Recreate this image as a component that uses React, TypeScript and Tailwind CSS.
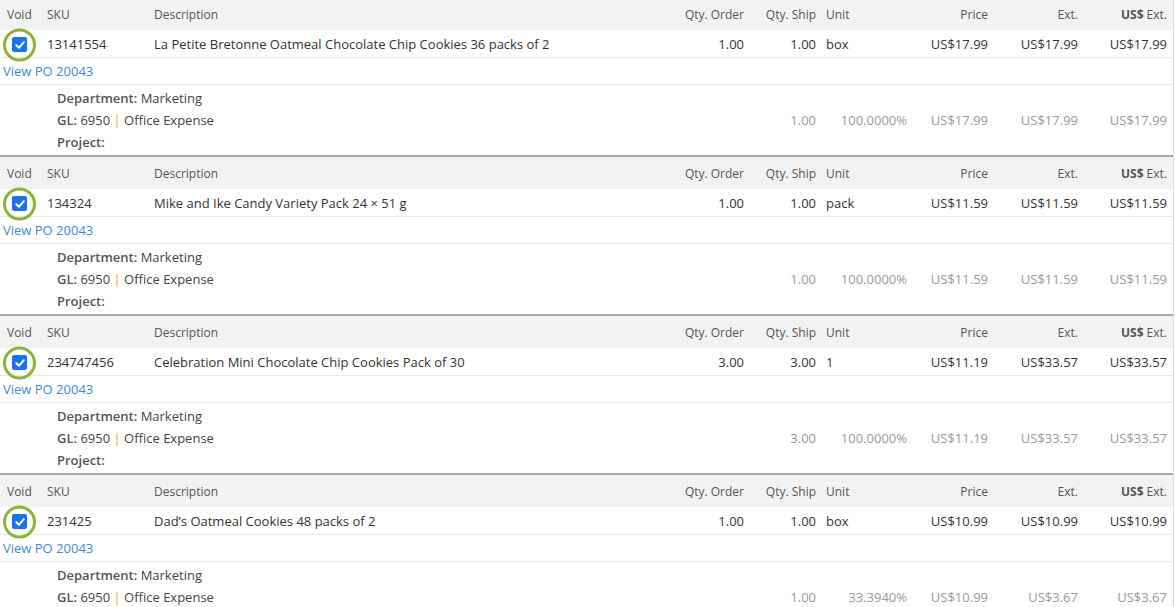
import React from "react";

type Item = {
  sku: string;
  desc: string;
  qo: string;
  qs: string;
  unit: string;
  price: string;
  ext: string;
  usd: string;
  dqs: string;
  pct: string;
  dprice: string;
  dext: string;
  dusd: string;
};

const items: Item[] = [
  {
    sku: "13141554",
    desc: "La Petite Bretonne Oatmeal Chocolate Chip Cookies 36 packs of 2",
    qo: "1.00",
    qs: "1.00",
    unit: "box",
    price: "US$17.99",
    ext: "US$17.99",
    usd: "US$17.99",
    dqs: "1.00",
    pct: "100.0000%",
    dprice: "US$17.99",
    dext: "US$17.99",
    dusd: "US$17.99",
  },
  {
    sku: "134324",
    desc: "Mike and Ike Candy Variety Pack 24 × 51 g",
    qo: "1.00",
    qs: "1.00",
    unit: "pack",
    price: "US$11.59",
    ext: "US$11.59",
    usd: "US$11.59",
    dqs: "1.00",
    pct: "100.0000%",
    dprice: "US$11.59",
    dext: "US$11.59",
    dusd: "US$11.59",
  },
  {
    sku: "234747456",
    desc: "Celebration Mini Chocolate Chip Cookies Pack of 30",
    qo: "3.00",
    qs: "3.00",
    unit: "1",
    price: "US$11.19",
    ext: "US$33.57",
    usd: "US$33.57",
    dqs: "3.00",
    pct: "100.0000%",
    dprice: "US$11.19",
    dext: "US$33.57",
    dusd: "US$33.57",
  },
  {
    sku: "231425",
    desc: "Dad’s Oatmeal Cookies 48 packs of 2",
    qo: "1.00",
    qs: "1.00",
    unit: "box",
    price: "US$10.99",
    ext: "US$10.99",
    usd: "US$10.99",
    dqs: "1.00",
    pct: "33.3940%",
    dprice: "US$10.99",
    dext: "US$3.67",
    dusd: "US$3.67",
  },
];

const cols =
  "grid grid-cols-[42px_107px_520px_80px_72px_91px_81px_90px_89px]";

function Check() {
  return (
    <div className="relative flex h-full items-center pl-[12px]">
      <div className="absolute left-[3px] top-1/2 h-[33px] w-[33px] -translate-y-1/2 rounded-full border-[3px] border-[#8cb43c]" />
      <div className="flex h-[15px] w-[15px] items-center justify-center rounded-[2px] bg-[#1a73e8]">
        <svg width="12" height="12" viewBox="0 0 12 12" fill="none">
          <path
            d="M2.3 6.3 L4.9 8.8 L9.8 3.2"
            stroke="white"
            strokeWidth="2"
            strokeLinecap="round"
            strokeLinejoin="round"
          />
        </svg>
      </div>
    </div>
  );
}

function Block({ it }: { it: Item }) {
  return (
    <div className="border-b-2 border-[#a9a9a9]">
      <div className={`${cols} h-[32px] items-center bg-[#f2f2f2] pt-[2px] text-[12px] text-[#555]`}>
        <div className="pl-[7px]">Void</div>
        <div className="pl-[5px]">SKU</div>
        <div className="pl-[5px]">Description</div>
        <div className="pr-[5px] text-right">Qty. Order</div>
        <div className="pr-[5px] text-right">Qty. Ship</div>
        <div className="pl-[5px]">Unit</div>
        <div className="pr-[5px] text-right">Price</div>
        <div className="pr-[5px] text-right">Ext.</div>
        <div className="pr-[5px] text-right">
          <span className="font-bold">US$</span> Ext.
        </div>
      </div>
      <div className={`${cols} h-[28px] items-center border-b border-[#e9e9e9] pt-[2px] text-[13px] text-[#333]`}>
        <Check />
        <div className="pl-[5px]">{it.sku}</div>
        <div className="pl-[5px]">{it.desc}</div>
        <div className="pr-[5px] text-right">{it.qo}</div>
        <div className="pr-[5px] text-right">{it.qs}</div>
        <div className="pl-[5px]">{it.unit}</div>
        <div className="pr-[5px] text-right">{it.price}</div>
        <div className="pr-[5px] text-right">{it.ext}</div>
        <div className="pr-[5px] text-right">{it.usd}</div>
      </div>
      <div className="flex h-[27px] items-center border-b border-[#e9e9e9] pl-[3px] pt-[2px] text-[13px] text-[#3d8bd6]">
        View PO 20043
      </div>
      <div className={`${cols} h-[70px] items-center text-[13px]`}>
        <div className="col-span-4 flex flex-col pl-[57px] leading-[22px] text-[#444]">
          <div>
            <span className="font-semibold text-[#555]">Department:</span> Marketing
          </div>
          <div>
            <span className="font-semibold text-[#555]">GL:</span> 6950{" "}
            <span className="text-[#f0a030]">|</span> Office Expense
          </div>
          <div>
            <span className="font-semibold text-[#555]">Project:</span>
          </div>
        </div>
        <div className="pr-[5px] pt-[2px] text-right text-[#999]">{it.dqs}</div>
        <div className="pr-[5px] pt-[2px] text-right text-[#999]">{it.pct}</div>
        <div className="pr-[5px] pt-[2px] text-right text-[#999]">{it.dprice}</div>
        <div className="pr-[5px] pt-[2px] text-right text-[#999]">{it.dext}</div>
        <div className="pr-[5px] pt-[2px] text-right text-[#999]">{it.dusd}</div>
      </div>
    </div>
  );
}

export default function App() {
  return (
    <div
      className="h-[607px] w-[1175px] overflow-hidden bg-white"
      style={{ fontFamily: '"Open Sans", "Liberation Sans", sans-serif' }}
    >
      <div className="-mt-[2px] w-[1174px] border-r border-[#dcdcdc]">
        {items.map((it) => (
          <Block key={it.sku} it={it} />
        ))}
      </div>
    </div>
  );
}
